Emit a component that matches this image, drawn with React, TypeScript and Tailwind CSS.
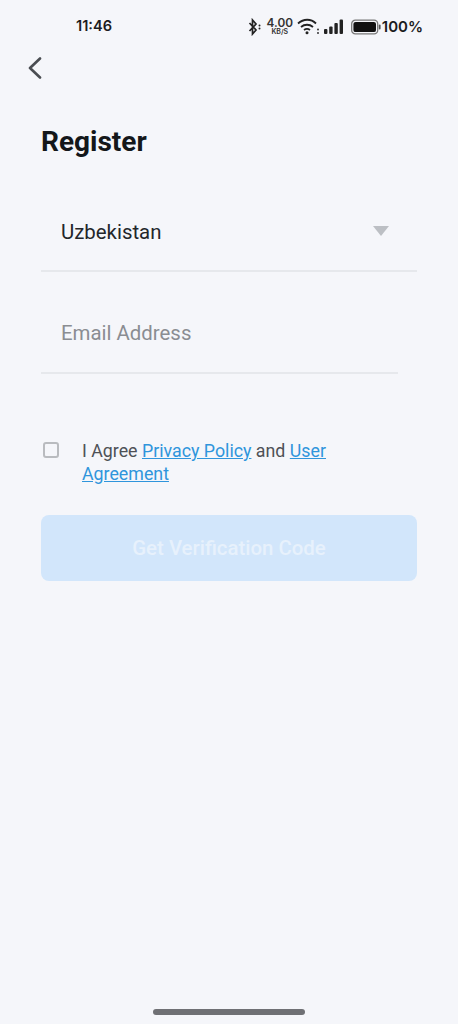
export default function App() {
  return (
    <div className="relative h-[1024px] w-[458px] overflow-hidden bg-[#f5f6fa] font-['Roboto',sans-serif]">
      {/* Status bar */}
      <div className="flex h-[42px] items-center justify-between pl-[76px] pr-[35px] pt-[11px] font-['Inter',sans-serif] text-[#1c1c1e]">
        <span className="text-[14.6px] font-semibold leading-none">11:46</span>
        <div className="flex items-center">
          <svg width="14" height="18" viewBox="0 0 14 18" fill="none" stroke="#222" strokeWidth="1.7">
            <path d="M1.5 5l6.5 7-3.5 4V2L8 6l-6.5 7" />
            <circle cx="11.5" cy="7.5" r="1" fill="#222" stroke="none" />
            <circle cx="11.5" cy="10.5" r="1" fill="#222" stroke="none" />
          </svg>
          <div className="ml-[5px] flex w-[26px] flex-col items-center text-[#333]">
            <span className="text-[11.8px] font-semibold leading-[10px]">4.00</span>
            <span className="text-[7px] font-semibold leading-[8px]">KB/S</span>
          </div>
          <svg className="ml-[4px]" width="23" height="17" viewBox="0 0 23 17" fill="none" stroke="#222" strokeWidth="1.8">
            <path d="M1 5.5c5.5-5 13-5 18 0" />
            <path d="M4 9c3.5-3 8.5-3 12 0" />
            <path d="M7 12c2-1.4 4-1.4 6 0" />
            <circle cx="10" cy="14.8" r="1.5" fill="#222" stroke="none" />
            <circle cx="21" cy="11.5" r="0.9" fill="#222" stroke="none" />
            <circle cx="21" cy="15" r="0.9" fill="#222" stroke="none" />
          </svg>
          <svg className="ml-[4px]" width="20" height="16" viewBox="0 0 20 16" fill="#222">
            <rect x="0" y="10" width="3.4" height="5" rx="1" />
            <rect x="5.2" y="7.5" width="3.4" height="7.5" rx="1" />
            <rect x="10.4" y="4" width="3.4" height="11" rx="1" />
            <rect x="15.6" y="0.5" width="3.4" height="14.5" rx="1" />
          </svg>
          <svg className="ml-[7px]" width="30" height="16" viewBox="0 0 30 16">
            <rect x="0.7" y="1.2" width="26" height="13.6" rx="3.6" fill="none" stroke="#777" strokeWidth="1.3" />
            <rect x="2.4" y="2.9" width="22.6" height="10.2" rx="2.2" fill="#111" />
            <rect x="27.8" y="5.5" width="1.8" height="5" rx="0.9" fill="#555" />
          </svg>
          <span className="ml-[1px] text-[15px] font-semibold leading-none">100%</span>
        </div>
      </div>

      {/* Back */}
      <div className="pl-[28px] pt-[15px]">
        <svg width="14" height="22" viewBox="0 0 14 22" fill="none" stroke="#4a4d52" strokeWidth="2.6" strokeLinecap="round" strokeLinejoin="round">
          <path d="M12 1.5L2 11l10 9.5" />
        </svg>
      </div>

      <h1 className="ml-[41px] mt-[47px] text-[28px] font-bold leading-[32px] text-[#14171a]">Register</h1>

      {/* Country */}
      <div className="ml-[41px] mt-[42px] flex h-[72px] w-[376px] items-center justify-between border-b-2 border-[#e6e8ec] pb-[6px] pl-[20px] pr-[28px]">
        <span className="text-[20.4px] text-[#23262a]">Uzbekistan</span>
        <svg width="16" height="10" viewBox="0 0 16 10" className="mb-[2px]">
          <path d="M0 0h16L8 10z" fill="#bcbfc4" />
        </svg>
      </div>

      {/* Email */}
      <div className="ml-[41px] flex h-[102px] w-[357px] items-center border-b-2 border-[#e6e8ec] pl-[20px] pt-[22px]">
        <span className="text-[20.4px] text-[#8a8d92]">Email Address</span>
      </div>

      {/* Agreement */}
      <div className="ml-[43px] mt-[65px] flex">
        <div className="mt-[3px] h-[16px] w-[16px] shrink-0 rounded-[3px] border-2 border-[#b9bbbf]" />
        <p className="ml-[23px] w-[290px] text-[17.8px] leading-[23px] text-[#4e5156]">
          I Agree{" "}
          <span className="text-[#2f95dc] underline">Privacy Policy</span> and{" "}
          <span className="text-[#2f95dc] underline">User Agreement</span>
        </p>
      </div>

      {/* Button */}
      <div className="ml-[41px] mt-[30px] flex h-[66px] w-[376px] items-center justify-center rounded-[8px] bg-[#d2e6fb]">
        <span className="text-[20.4px] font-medium text-[#e7f1fc]">Get Verification Code</span>
      </div>

      {/* Home indicator */}
      <div className="absolute bottom-[9px] left-[153px] h-[6px] w-[152px] rounded-full bg-[#6f7074]" />
    </div>
  );
}
